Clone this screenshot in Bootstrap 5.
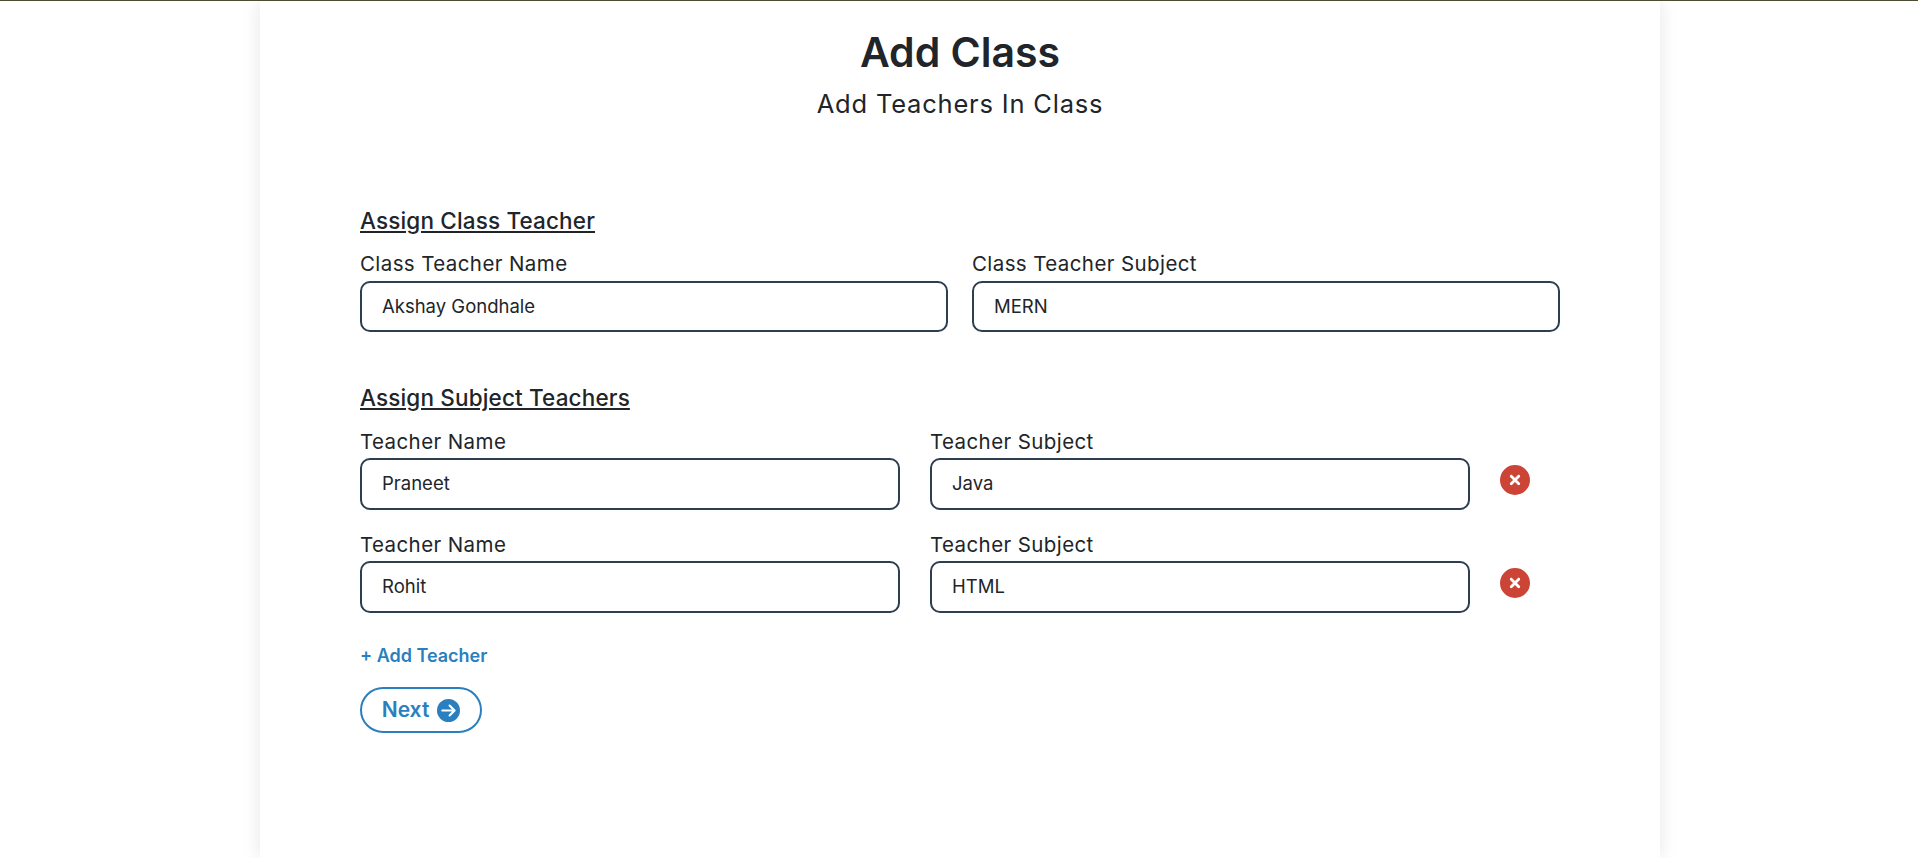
<!DOCTYPE html>
<html lang="en"><head><meta charset="utf-8"><title>Add Class</title>
<link href="https://cdn.jsdelivr.net/npm/bootstrap@5.3.0/dist/css/bootstrap.min.css" rel="stylesheet">
<style>
html,body{height:100%}
body{font-family:Inter,"Liberation Sans",sans-serif;color:#212529;background:#fff;border-top:1px solid #4d4a36;overflow:hidden}
.sheet{width:1400px;min-height:857px;margin-left:260px;padding:26px 100px 0;box-shadow:0 0 18px rgba(0,0,0,.1)}
.ttl{font-size:41px;font-weight:600;line-height:50px;margin:0;letter-spacing:0}
.sub{font-size:25.5px;font-weight:400;line-height:36px;margin:9px 0 0;letter-spacing:.8px}
.sect{font-size:22.5px;font-weight:500;line-height:28px;margin:0;text-decoration:underline;letter-spacing:.15px}
.sect-a{margin-top:85px}.sect-b{margin-top:52px}
.lbl{font-size:20.5px;line-height:28px;margin:0 0 3px;display:block;letter-spacing:.4px}
.trow .lbl{margin-bottom:2px}
.form-control.fld{height:51px;border:2px solid #2c3e50;border-radius:10px;padding:0 20px 2px;font-size:18.5px;color:#212529;box-shadow:none}
.trow .form-control.fld{height:52px}
.tfield{width:540px}.tgap{column-gap:30px}
.trow{margin-top:16px}.trow+.trow{margin-top:21px}
.sect-row{margin-top:15px}
.rm{width:30px;height:30px;margin-top:37px;padding:0;border:0;background:none;line-height:0}
.addt{display:block;width:max-content;color:#2a7fbf;font-size:18px;font-weight:600;text-decoration:none;margin-top:31px;line-height:24px}
.nxt{margin-top:19px;width:122px;height:46px;border:2px solid #2a7fbf;border-radius:24px;color:#2a7fbf;background:#fff;font-size:21px;font-weight:600;padding:0;gap:8px}
</style></head><body>
<main class="sheet">
<header class="text-center"><h1 class="ttl">Add Class</h1><h2 class="sub">Add Teachers In Class</h2></header>
<h3 class="sect sect-a">Assign Class Teacher</h3>
<div class="row gx-4 sect-row">
<div class="col-6"><label class="lbl">Class Teacher Name</label><input class="form-control fld" value="Akshay Gondhale"></div>
<div class="col-6"><label class="lbl">Class Teacher Subject</label><input class="form-control fld" value="MERN"></div>
</div>
<h3 class="sect sect-b">Assign Subject Teachers</h3>
<div class="d-flex tgap trow">
<div class="tfield"><label class="lbl">Teacher Name</label><input class="form-control fld" value="Praneet"></div>
<div class="tfield"><label class="lbl">Teacher Subject</label><input class="form-control fld" value="Java"></div>
<button class="rm" aria-label="Remove"><svg width="30" height="30" viewBox="0 0 512 512"><path fill="#cc4435" d="M256 512A256 256 0 1 0 256 0a256 256 0 1 0 0 512zM175 175c9.4-9.4 24.6-9.4 33.9 0l47 47 47-47c9.4-9.4 24.6-9.4 33.9 0s9.4 24.6 0 33.9l-47 47 47 47c9.4 9.4 9.4 24.6 0 33.9s-24.6 9.4-33.9 0l-47-47-47 47c-9.4 9.4-24.6 9.4-33.9 0s-9.4-24.6 0-33.9l47-47-47-47c-9.4-9.4-9.4-24.6 0-33.9z"/></svg></button>
</div>
<div class="d-flex tgap trow">
<div class="tfield"><label class="lbl">Teacher Name</label><input class="form-control fld" value="Rohit"></div>
<div class="tfield"><label class="lbl">Teacher Subject</label><input class="form-control fld" value="HTML"></div>
<button class="rm" aria-label="Remove"><svg width="30" height="30" viewBox="0 0 512 512"><path fill="#cc4435" d="M256 512A256 256 0 1 0 256 0a256 256 0 1 0 0 512zM175 175c9.4-9.4 24.6-9.4 33.9 0l47 47 47-47c9.4-9.4 24.6-9.4 33.9 0s9.4 24.6 0 33.9l-47 47 47 47c9.4 9.4 9.4 24.6 0 33.9s-24.6 9.4-33.9 0l-47-47-47 47c-9.4 9.4-24.6 9.4-33.9 0s-9.4-24.6 0-33.9l47-47-47-47c-9.4-9.4-9.4-24.6 0-33.9z"/></svg></button>
</div>
<a class="addt" href="#">+ Add Teacher</a>
<button class="btn nxt d-inline-flex align-items-center justify-content-center">Next <svg width="23" height="23" viewBox="0 0 512 512"><path fill="#2a7fbf" d="M0 256a256 256 0 1 0 512 0A256 256 0 1 0 0 256zM297 385c-9.4 9.4-24.6 9.4-33.9 0s-9.4-24.6 0-33.9l71-71L120 280c-13.3 0-24-10.7-24-24s10.7-24 24-24l214.1 0-71-71c-9.4-9.4-9.4-24.6 0-33.9s24.6-9.4 33.9 0L409 239c9.4 9.4 9.4 24.6 0 33.9L297 385z"/></svg></button>
</main>
<script src="https://cdn.jsdelivr.net/npm/bootstrap@5.3.0/dist/js/bootstrap.bundle.min.js"></script>
</body></html>
